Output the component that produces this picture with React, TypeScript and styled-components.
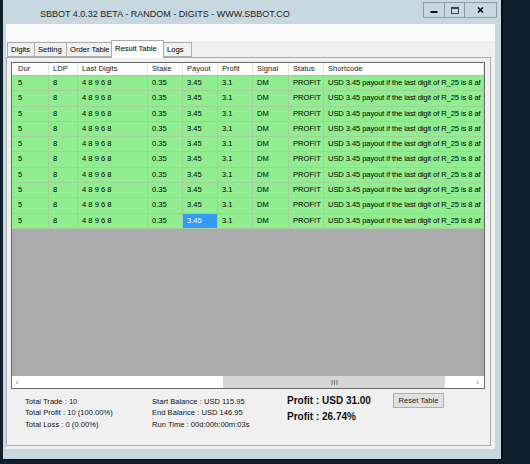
import React from "react";
import styled, { createGlobalStyle } from "styled-components";

const GlobalStyle = createGlobalStyle`
  html, body {
    margin: 0;
    padding: 0;
    background: #0f1f2b;
  }
  body {
    width: 530px;
    height: 464px;
    overflow: hidden;
    font-family: "Liberation Sans", Arial, sans-serif;
    color: #000;
  }
`;

const GRID = "#a3cf9d";
const GREEN = "#90ee90";

const columns = [
  { title: "Dur", width: 37 },
  { title: "LDP", width: 29 },
  { title: "Last Digits", width: 70 },
  { title: "Stake", width: 35 },
  { title: "Payout", width: 35 },
  { title: "Profit", width: 35 },
  { title: "Signal", width: 36 },
  { title: "Status", width: 35 },
  { title: "Shortcode", width: 0 },
];

const gridTemplate = columns.map((c) => (c.width ? `${c.width}px` : "1fr")).join(" ");

// the shortcode column is cut by the list edge in the app, only the visible part is kept
const rowData = [
  "5",
  "8",
  "4 8 9 6 8",
  "0.35",
  "3.45",
  "3.1",
  "DM",
  "PROFIT",
  "USD 3.45 payout if the last digit of R_25 is 8 af",
];

const rows = Array.from({ length: 10}, () => rowData);

const tabs = [
  { label: "Digits", width: 28 },
  { label: "Setting", width: 33 },
  { label: "Order Table", width: 46 },
  { label: "Result Table", width: 53, active: true },
  { label: "Logs", width: 29 },
];

const Window = styled.div`
  margin-left: 3px;
  width: 498px;
  height: 459px;
  background: #c8d8e1;
  display: flex;
  flex-direction: column;
  box-shadow: 2px 0 0 #070d12, 0 1px 0 #070d12;
`;

const TitleBar = styled.div`
  height: 24px;
  display: flex;
  align-items: flex-start;
  padding: 0 4px 0 37px;
  box-sizing: border-box;
`;

const Title = styled.div`
  flex: 1;
  line-height: 28px;
  font-size: 9px;
  color: #222;
`;

const WinButtons = styled.div`
  margin-top: 2px;
  display: flex;
  height: 16px;
  border: 1px solid #8b9ba5;
  box-sizing: border-box;
`;

const WinButton = styled.div<{ w: number }>`
  width: ${(p) => p.w}px;
  display: flex;
  align-items: center;
  justify-content: center;
  & + & {
    border-left: 1px solid #8b9ba5;
  }
`;

const Client = styled.div`
  margin: 0 6px 0 3px;
  height: 425px;
  background: #f0f0f0;
  display: flex;
  flex-direction: column;
`;

const TopStrip = styled.div`
  height: 17px;
  background: #fafafa;
`;

const TabStrip = styled.div`
  height: 16px;
  display: flex;
  align-items: flex-end;
  padding-left: 1px;
  position: relative;
  z-index: 1;
`;

const Tab = styled.div<{ w: number; active?: boolean }>`
  width: ${(p) => p.w}px;
  height: ${(p) => (p.active ? 18 : 15)}px;
  margin-bottom: ${(p) => (p.active ? -1 : 0)}px;
  margin-right: -1px;
  box-sizing: border-box;
  border: 1px solid #acacac;
  border-bottom: ${(p) => (p.active ? "none" : "1px solid #acacac")};
  background: ${(p) => (p.active ? "#fcfcfc" : "#f0f0f0")};
  font-size: 7.6px;
  line-height: ${(p) => (p.active ? 15 : 13)}px;
  padding-left: 3px;
  position: relative;
  z-index: ${(p) => (p.active ? 2 : 1)};
  white-space: nowrap;
`;

const TabPage = styled.div`
  margin-right: 4px;
  height: 389px;
  box-sizing: border-box;
  border: 1px solid #acacac;
  background: #f0f0f0;
  padding: 4px 5px 0 4px;
  display: flex;
  flex-direction: column;
`;

const ListView = styled.div`
  height: 327px;
  box-sizing: border-box;
  border: 1px solid #6a6a6a;
  background: #ababab;
  display: flex;
  flex-direction: column;
  overflow: hidden;
`;

const HeaderRow = styled.div`
  height: 13px;
  display: grid;
  grid-template-columns: ${gridTemplate};
  background: #fff;
  box-sizing: border-box;
  border-bottom: 1px solid ${GRID};
`;

const HeaderCell = styled.div<{ first?: boolean }>`
  padding-left: ${(p) => (p.first ? 6 : 4)}px;
  border-right: 1px solid #e3e3e3;
  font-size: 7.6px;
  line-height: 12px;
  color: #1a1a1a;
  white-space: nowrap;
  overflow: hidden;
`;

const Row = styled.div`
  height: 15.3px;
  box-sizing: border-box;
  display: grid;
  grid-template-columns: ${gridTemplate};
  background: ${GREEN};
  border-bottom: 1px solid ${GRID};
`;

const Cell = styled.div<{ first?: boolean; selected?: boolean; tight?: boolean }>`
  padding-left: ${(p) => (p.first ? 6 : 4)}px;
  border-right: 1px solid ${GRID};
  font-size: 7.6px;
  line-height: 14.3px;
  letter-spacing: ${(p) => (p.tight ? "-0.1px" : "normal")};
  white-space: nowrap;
  overflow: hidden;
  background: ${(p) => (p.selected ? "#3399ff" : "transparent")};
  color: ${(p) => (p.selected ? "#fff" : "#000")};
`;

const EmptyArea = styled.div`
  flex: 1;
`;

const HScroll = styled.div`
  height: 12px;
  display: flex;
  background: #fff;
`;

const ScrollArrow = styled.div<{ w: number }>`
  width: ${(p) => p.w}px;
  display: flex;
  align-items: center;
  justify-content: center;
  font-size: 8px;
  color: #777;
`;

const ScrollTrack = styled.div`
  flex: 1;
  display: flex;
  align-items: stretch;
`;

const Thumb = styled.div`
  margin-left: 201px;
  width: 222px;
  background: #d6d6d6;
  display: flex;
  align-items: center;
  justify-content: center;
`;

const Stats = styled.div`
  flex: 1;
  display: grid;
  grid-template-columns: 127px 135px 106px auto;
  padding-left: 14px;
`;

const StatCol = styled.div`
  padding-top: 7px;
  font-size: 7.6px;
  line-height: 11.3px;
  color: #111;
  white-space: nowrap;
`;

const ProfitCol = styled.div`
  padding-top: 4px;
  font-size: 10px;
  font-weight: bold;
  line-height: 16px;
  color: #111;
  white-space: nowrap;
`;

const ResetButton = styled.div`
  margin-top: 4px;
  width: 51px;
  height: 15px;
  box-sizing: border-box;
  border: 1px solid #adadad;
  background: #e1e1e1;
  font-size: 7.6px;
  line-height: 13px;
  text-align: center;
  color: #222;
`;

const Grip = () => (
  <svg width="7" height="5" viewBox="0 0 7 5">
    <path d="M1 0v5M3.5 0v5M6 0v5" stroke="#777" strokeWidth="1" />
  </svg>
);

const App = () => {
  return (
    <>
      <GlobalStyle />
      <Window>
        <TitleBar>
          <Title>SBBOT 4.0.32 BETA - RANDOM - DIGITS - WWW.SBBOT.CO</Title>
          <WinButtons>
            <WinButton w={20}>
              <svg width="8" height="8" viewBox="0 0 8 8">
                <rect x="0.5" y="5" width="7" height="2" fill="#111" />
              </svg>
            </WinButton>
            <WinButton w={19}>
              <svg width="8" height="7" viewBox="0 0 8 7">
                <rect x="0.5" y="0.5" width="7" height="6" fill="none" stroke="#444" strokeWidth="1" />
                <rect x="0.5" y="0.5" width="7" height="1.5" fill="#444" />
              </svg>
            </WinButton>
            <WinButton w={31}>
              <svg width="7" height="6" viewBox="0 0 7 6">
                <path d="M1 0.5L6 5.5M6 0.5L1 5.5" stroke="#111" strokeWidth="1.6" />
              </svg>
            </WinButton>
          </WinButtons>
        </TitleBar>
        <Client>
          <TopStrip />
          <TabStrip>
            {tabs.map((t) => (
              <Tab key={t.label} w={t.width} active={t.active}>
                {t.label}
              </Tab>
            ))}
          </TabStrip>
          <TabPage>
            <ListView>
              <HeaderRow>
                {columns.map((c, i) => (
                  <HeaderCell key={c.title} first={i === 0}>
                    {c.title}
                  </HeaderCell>
                ))}
              </HeaderRow>
              {rows.map((r, ri) => (
                <Row key={ri}>
                  {r.map((v, ci) => (
                    <Cell
                      key={ci}
                      first={ci === 0}
                      tight={ci === 8}
                      selected={ri === 9 && ci === 4}
                    >
                      {v}
                    </Cell>
                  ))}
                </Row>
              ))}
              <EmptyArea />
              <HScroll>
                <ScrollArrow w={10}>‹</ScrollArrow>
                <ScrollTrack>
                  <Thumb>
                    <Grip />
                  </Thumb>
                </ScrollTrack>
                <ScrollArrow w={13}>›</ScrollArrow>
              </HScroll>
            </ListView>
            <Stats>
              <StatCol>
                <div>Total Trade : 10</div>
                <div>Total Profit : 10 (100.00%)</div>
                <div>Total Loss : 0 (0.00%)</div>
              </StatCol>
              <StatCol>
                <div>Start Balance : USD 115.95</div>
                <div>End Balance : USD 146.95</div>
                <div>Run Time : 00d:00h:00m:03s</div>
              </StatCol>
              <ProfitCol>
                <div>Profit : USD 31.00</div>
                <div>Profit : 26.74%</div>
              </ProfitCol>
              <ResetButton>Reset Table</ResetButton>
            </Stats>
          </TabPage>
        </Client>
      </Window>
    </>
  );
};

export default App;
